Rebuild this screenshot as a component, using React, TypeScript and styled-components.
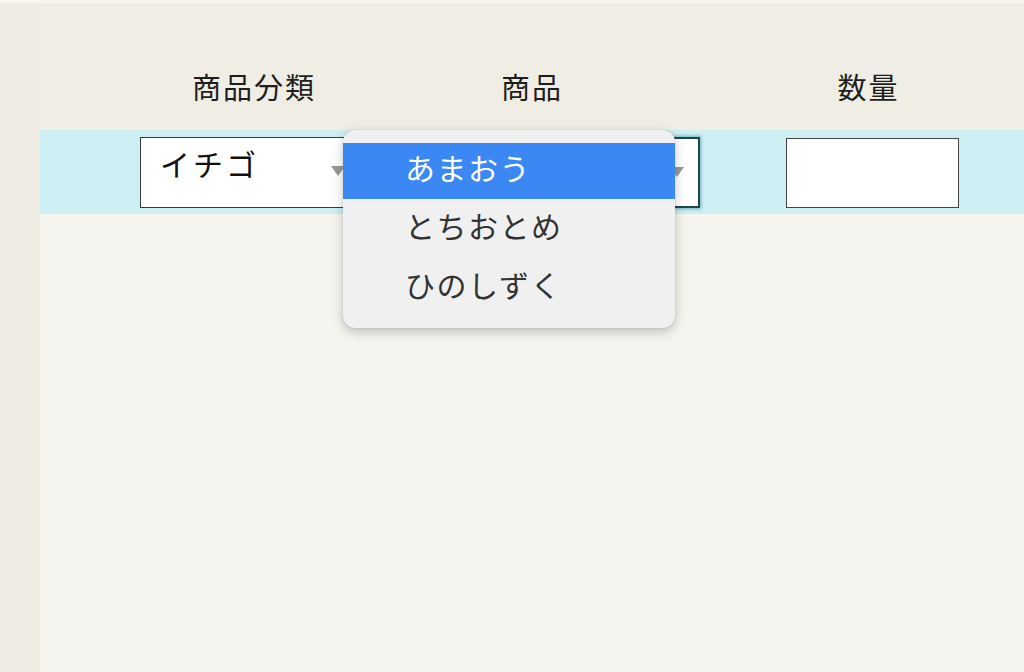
import styled, { createGlobalStyle } from "styled-components";

const GlobalStyle = createGlobalStyle`
    html, body {
        margin: 0;
        padding: 0;
        background: #efece3;
        font-family: "Noto Sans CJK JP", "Noto Sans", sans-serif;
    }
`

const Page = styled.div`
    display: flex;
    width: 1024px;
    height: 672px;
    overflow: hidden;
    border-top: 3px solid #f7f5ee;
    box-sizing: border-box;
`
const Side = styled.div`
    width: 40px;
    flex-shrink: 0;
    background: #efece3;
`
const Main = styled.div`
    flex: 1;
    display: flex;
    flex-direction: column;
    background: #f6f4ef;
`
const Grid = styled.div`
    display: grid;
    grid-template-columns: 220px 336px 255px;
    column-gap: 4px;
    padding-left: 100px;
    & > :nth-child(3) {
        margin-left: 82px;
    }
`
const HeaderRow = styled(Grid)`
    height: 127px;
    background: #f0ede4;
    align-items: end;
    padding-bottom: 23px;
    box-sizing: border-box;
`
const HeadCell = styled.div<{ $shift?: number }>`
    text-align: center;
    font-size: 29px;
    letter-spacing: 2px;
    color: #1e1e1e;
    transform: translateX(${props => props.$shift || 0}px);
`
const BodyRow = styled(Grid)`
    position: relative;
    height: 84px;
    background: #cdeef2;
    padding-top: 7px;
    box-sizing: border-box;
    align-items: start;
`
const Select = styled.div<{ $focused?: boolean }>`
    position: relative;
    height: 71px;
    box-sizing: border-box;
    background: #fff;
    border: ${props => props.$focused ? '2px solid #1d4650' : '1px solid #3a3a3a'};
    box-shadow: ${props => props.$focused ? '0 0 3px 1px rgba(40,120,140,0.5)' : 'none'};
    padding: 3px 0 0 19px;
    font-size: 30px;
    letter-spacing: 3px;
    color: #111;
`
const Arrow = styled.span`
    position: absolute;
    right: 14px;
    top: 28px;
    width: 0;
    height: 0;
    border-left: 7px solid transparent;
    border-right: 7px solid transparent;
    border-top: 10px solid #9a9a9a;
`
const Input = styled.div`
    height: 70px;
    margin-top: 1px;
    box-sizing: border-box;
    background: #fff;
    border: 1px solid #444;
`
const Menu = styled.div`
    position: absolute;
    left: 303px;
    top: 0;
    width: 332px;
    height: 198px;
    box-sizing: border-box;
    padding-top: 13px;
    border-radius: 12px;
    background: #f0f0f0;
    box-shadow: 0 4px 12px rgba(0, 0, 0, 0.22), 0 0 1px rgba(0, 0, 0, 0.3);
    z-index: 5;
`
const Option = styled.div<{ $active?: boolean }>`
    display: flex;
    align-items: center;
    height: ${props => props.$active ? '56px' : '59px'};
    padding: 0 0 8px 62px;
    box-sizing: border-box;
    font-size: 30px;
    letter-spacing: 1.5px;
    background: ${props => props.$active ? '#3b88f4' : 'transparent'};
    color: ${props => props.$active ? '#fff' : '#333'};
`
const Rest = styled.div`
    flex: 1;
    background: #f6f4ef;
`

const options = ["あまおう", "とちおとめ", "ひのしずく"];

export default function App() {
    return (
        <>
            <GlobalStyle />
            <Page>
                <Side />
                <Main>
                    <HeaderRow>
                        <HeadCell $shift={4}>商品分類</HeadCell>
                        <HeadCell>商品</HeadCell>
                        <HeadCell $shift={-4}>数量</HeadCell>
                    </HeaderRow>
                    <BodyRow>
                        <Select>
                            イチゴ
                            <Arrow />
                        </Select>
                        <Select $focused>
                            <Arrow />
                        </Select>
                        <Input />
                        <Menu>
                            {options.map((o, i) => (
                                <Option key={o} $active={i === 0}>{o}</Option>
                            ))}
                        </Menu>
                    </BodyRow>
                    <Rest />
                </Main>
            </Page>
        </>
    );
}
